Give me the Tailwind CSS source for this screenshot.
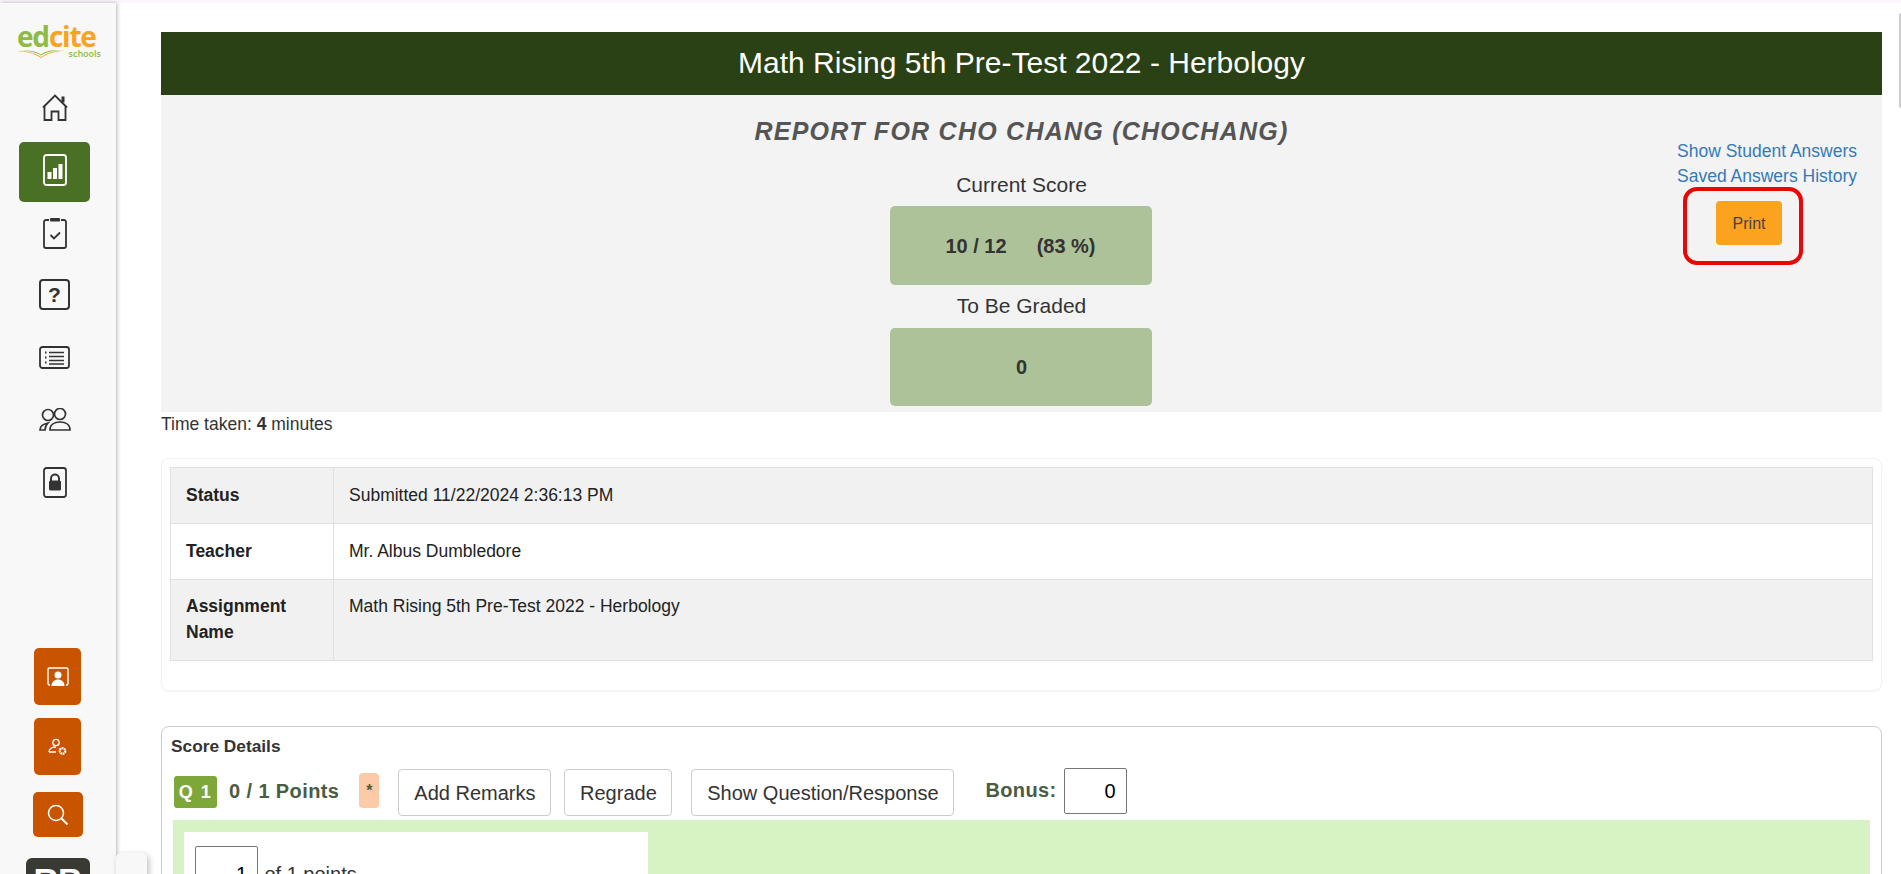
<!DOCTYPE html>
<html lang="en">
<head>
    <meta charset="UTF-8">
    <title>Report - Math Rising 5th Pre-Test 2022 - Herbology</title>
    <script src="https://cdn.jsdelivr.net/npm/@tailwindcss/browser@4"></script>
</head>
<body class="h-[874px] overflow-hidden bg-white font-['Liberation_Sans',Arial,sans-serif] text-[#333]">
    <div class="h-[3px] bg-[#fdf5fd]"></div>
    <div class="flex h-[871px]">
        <!-- Sidebar -->
        <aside class="relative flex h-full w-[116px] shrink-0 flex-col items-start bg-[#f8f8f8] pt-[23px] pl-[19px] shadow-[1px_0_4px_rgba(0,0,0,0.3)]">
            <div class="relative -ml-[2px] h-[37px] w-[84px]">
                <div class="font-['Open_Sans',sans-serif] text-[28px] leading-[20px] font-bold tracking-[-1.200px]"><span class="text-[#8dbb45]">ed</span><span class="text-[#fba21e]">cite</span></div>
                <div class="absolute top-[22px] right-0 font-['Open_Sans',sans-serif] text-[9px] leading-[12px] font-semibold text-[#8dbb45]">schools</div>
                <svg class="absolute top-[24px] left-0" width="48" height="8" viewBox="0 0 48 8" fill="none"><path d="M0 1c8 0 17 1 24 6C31 2 40 0 48 1c-9 0-17 2-24 7C17 3 9 2 0 1z" fill="#fba21e"/><path d="M5 .5c8-.5 15 1 19 4 4-3 11-5 19-4.500-7 .5-14 2-19 5.500C20 2.500 12 1 5 .5z" fill="#8dbb45"/></svg>
            </div>
            <nav class="mt-[31px] flex flex-col items-center">
                <a class="flex h-[27px] w-[71px] items-center justify-center">
                    <svg width="26" height="27" viewBox="0 0 26 27" fill="none" stroke="#333" stroke-width="1.800"><path d="M1 13.500 13 1.500l12 12"/><path d="M2.500 12.500V26h7v-8.500h7V26h7V12.500"/><path d="M21 8.500V2.500" stroke-width="3"/></svg>
                </a>
                <a class="mt-[21px] flex h-[60px] w-[71px] items-center justify-center rounded-[5px] bg-[#4a7026] pb-[5px]">
                    <svg width="24" height="32" viewBox="0 0 24 32" fill="none"><rect x="1" y="1" width="22" height="30" rx="2.500" stroke="#fff" stroke-width="1.800"/><rect x="4.500" y="18" width="4" height="7" fill="#fff"/><rect x="10" y="14" width="4" height="11" fill="#fff"/><rect x="15.500" y="10" width="4" height="15" fill="#fff"/></svg>
                </a>
                <a class="mt-[15px] flex h-[32px] w-[71px] items-center justify-center">
                    <svg width="24" height="32" viewBox="0 0 24 32" fill="none" stroke="#333" stroke-width="1.800"><path d="M6 3H3a2 2 0 0 0-2 2v24a2 2 0 0 0 2 2h18a2 2 0 0 0 2-2V5a2 2 0 0 0-2-2h-3"/><rect x="7" y="1" width="10" height="3.500" rx="1" fill="#333" stroke="none"/><path d="m7.500 18 3.500 3.500 6-6"/></svg>
                </a>
                <a class="mt-[30px] flex h-[31px] w-[71px] items-center justify-center">
                    <div class="flex h-[31px] w-[31px] items-center justify-center rounded-[4px] border-2 border-[#333] text-[21px] leading-none font-bold">?</div>
                </a>
                <a class="mt-[36px] flex h-[23px] w-[71px] items-center justify-center">
                    <svg width="31" height="23" viewBox="0 0 31 23" fill="none" stroke="#333" stroke-width="1.800"><rect x="1" y="1" width="29" height="21" rx="2.500"/><path d="M10 6.500h15M10 10.500h15M10 14.500h15M10 18h15" stroke-width="1.500"/><path d="M6 6.500h1.500M6 11.500h1.500M6 16.500h1.500" stroke-width="1.800"/></svg>
                </a>
                <a class="mt-[39px] flex h-[23px] w-[71px] items-center justify-center">
                    <svg width="32" height="23" viewBox="0 0 32 23" fill="none" stroke="#333" stroke-width="1.700"><circle cx="9" cy="7" r="5.500"/><circle cx="21" cy="6" r="5.500"/><path d="M1 22c0-3.500 3-6 8-7-2 2-3 4-3 7z"/><path d="M11 22c0-5 4-8 10-8s10 3 10 8z"/></svg>
                </a>
                <a class="mt-[36px] flex h-[31px] w-[71px] items-center justify-center">
                    <svg width="24" height="31" viewBox="0 0 24 31" fill="none"><rect x="1" y="1" width="22" height="29" rx="2.500" stroke="#333" stroke-width="1.800"/><path d="M8 14v-2.500a4 4 0 0 1 8 0V14" stroke="#333" stroke-width="2"/><rect x="6" y="13.500" width="12" height="10" rx="1.500" fill="#333"/></svg>
                </a>
            </nav>
            <!-- Bottom buttons -->
            <div class="absolute top-[645px] left-[34px] flex h-[57px] w-[47px] items-center justify-center rounded-[5px] bg-[#c95400]">
                <svg width="22" height="20" viewBox="0 0 22 20" fill="none"><path d="M3 18H2.500A1.500 1.500 0 0 1 1 16.500V2.500A1.500 1.500 0 0 1 2.500 1h17A1.500 1.500 0 0 1 21 2.500v14a1.500 1.500 0 0 1-1.500 1.500H19" stroke="#fff" stroke-width="1.400"/><circle cx="11" cy="8" r="3.500" fill="#fff"/><path d="M4.500 19c0-4 3-6.500 6.500-6.500s6.500 2.500 6.500 6.500z" fill="#fff"/></svg>
            </div>
            <div class="absolute top-[715px] left-[34px] flex h-[57px] w-[47px] items-center justify-center rounded-[5px] bg-[#c95400]">
                <svg width="20" height="18" viewBox="0 0 20 18" fill="none"><circle cx="8" cy="4.500" r="3.200" stroke="#fff" stroke-width="1.300"/><path d="M1 14c0-3 3-5 7-5M1 14h7" stroke="#fff" stroke-width="1.300"/><circle cx="14.500" cy="13" r="2.800" stroke="#fff" stroke-width="2.200" stroke-dasharray="1.800 0.600"/></svg>
            </div>
            <div class="absolute top-[789px] left-[33px] flex h-[45px] w-[50px] items-center justify-center rounded-[5px] bg-[#c95400]">
                <svg width="22" height="22" viewBox="0 0 22 22" fill="none" stroke="#fff"><circle cx="9" cy="9" r="7.500" stroke-width="1.500"/><path d="m14.500 14.500 6 6" stroke-width="2"/></svg>
            </div>
            <div class="absolute top-[855px] left-[26px] flex h-[60px] w-[64px] justify-center overflow-hidden rounded-[6px] bg-[#3a3a34] pt-[4px] text-[34px] leading-[36px] font-bold text-white">RB</div>
            <div class="absolute top-[850px] left-[116px] h-[40px] w-[31px] rounded-[5px] bg-[#f8f8f8] shadow-[2px_2px_6px_rgba(0,0,0,0.25)]"></div>
        </aside>

        <!-- Main -->
        <main class="w-[1783px] pt-[29px] pl-[45px]">
            <h1 class="flex h-[63px] w-[1721px] items-center justify-center bg-[#2a4015] pb-[2px] text-[30px] text-white">Math Rising 5th Pre-Test 2022 - Herbology</h1>
            <section class="relative flex h-[317px] w-[1721px] flex-col items-center bg-[#f3f3f3] pt-[21px]">
                <h2 class="text-[25px] leading-[30px] font-bold tracking-[1.250px] text-[#555] italic">REPORT FOR CHO CHANG (CHOCHANG)</h2>
                <p class="mt-[26px] text-[21px] leading-[26px]">Current Score</p>
                <div class="mt-[8px] mr-[2px] flex h-[79px] w-[262px] items-center justify-center gap-[30px] rounded-[5px] bg-[#aec29a] text-[20px] font-bold">
                    <span>10 / 12</span><span>(83 %)</span>
                </div>
                <p class="mt-[8px] text-[21px] leading-[26px]">To Be Graded</p>
                <div class="mt-[9px] mr-[2px] flex h-[78px] w-[262px] items-center justify-center rounded-[5px] bg-[#aec29a] pl-[2px] text-[20px] font-bold">0</div>
                <div class="absolute top-[44px] right-[25px] flex flex-col text-[17.500px] leading-[25px] text-[#337ab7]">
                    <a>Show Student Answers</a>
                    <a>Saved Answers History</a>
                    <button class="mt-[12px] ml-[39px] h-[44px] w-[66px] rounded-[4px] bg-[#fba21e] text-[16px] text-[#444]">Print</button>
                </div>
                <div class="absolute top-[92px] left-[1522px] h-[78px] w-[120px] rounded-[14px] border-[4px] border-[#e90606]"></div>
            </section>
            <p class="mt-[1px] w-[1721px] text-[17.500px] leading-[23px]">Time taken: <b>4</b> minutes</p>

            <section class="mt-[22px] w-[1721px] rounded-[8px] border border-[#f2f2f2] p-[8px] pb-[29px] shadow-[0_1px_2px_rgba(0,0,0,0.05)]">
                <table class="w-full border-collapse text-[17.500px] leading-[25.500px] text-[#222]">
                    <tr class="h-[56px] bg-[#f1f1f1]">
                        <th class="w-[163px] border border-[#dee2e6] px-[15px] text-left">Status</th>
                        <td class="border border-[#dee2e6] px-[15px]">Submitted 11/22/2024 2:36:13 PM</td>
                    </tr>
                    <tr class="h-[56px]">
                        <th class="border border-[#dee2e6] px-[15px] text-left">Teacher</th>
                        <td class="border border-[#dee2e6] px-[15px]">Mr. Albus Dumbledore</td>
                    </tr>
                    <tr class="h-[81px] bg-[#f1f1f1]">
                        <th class="border border-[#dee2e6] px-[15px] pt-[14px] pb-[12px] text-left align-top">Assignment Name</th>
                        <td class="border border-[#dee2e6] px-[15px] pt-[14px] pb-[12px] align-top">Math Rising 5th Pre-Test 2022 - Herbology</td>
                    </tr>
                </table>
            </section>

            <section class="mt-[35px] h-[300px] w-[1721px] rounded-[8px] border border-[#ccc] px-[11px] pt-[7px]">
                <h3 class="-ml-[2px] text-[17.300px] leading-[24px] font-bold">Score Details</h3>
                <div class="mt-[9px] flex h-[53px] items-start">
                    <span class="mt-[9px] ml-[1px] flex h-[32px] w-[43px] items-center justify-center rounded-[3px] bg-[#7ea73a] text-[18px] font-bold tracking-[1.500px] text-white">Q 1</span>
                    <span class="mt-[9px] ml-[12px] text-[20px] leading-[30px] font-bold tracking-[0.400px] text-[#4a5d42]">0 / 1 Points</span>
                    <span class="mt-[6px] ml-[20px] flex h-[35px] w-[20px] items-center justify-center rounded-[4px] bg-[#fdcaa8] font-bold text-[#4a5d42]">*</span>
                    <button class="mt-[2px] ml-[19px] h-[47px] w-[153px] rounded-[4px] border border-[#ccc] text-[20px]">Add Remarks</button>
                    <button class="mt-[2px] ml-[13px] h-[47px] w-[108px] rounded-[4px] border border-[#ccc] text-[20px]">Regrade</button>
                    <button class="mt-[2px] ml-[19px] h-[47px] w-[263px] rounded-[4px] border border-[#ccc] text-[20px]">Show Question/Response</button>
                    <span class="mt-[8px] ml-[31px] text-[20px] leading-[30px] font-bold tracking-[0.400px] text-[#4a5d42]">Bonus:</span>
                    <input class="mt-[1px] ml-[7px] h-[46px] w-[63px] rounded-[2px] border border-[#767676] px-[10px] text-right text-[20px] text-black" value="0">
                </div>
                <div class="h-[100px] bg-[#d7f2c3] pt-[12px] pl-[11px]">
                    <div class="h-[100px] w-[464px] bg-white pt-[14px] pl-[11px]">
                        <input class="h-[56px] w-[63px] rounded-[2px] border border-[#767676] px-[10px] text-right text-[20px] text-black" value="1">
                        <span class="ml-[2px] text-[20px]">of 1 points</span>
                    </div>
                </div>
            </section>
        </main>
        <div class="mt-[10px] h-[95px] w-[2px] rounded-l-[2px] bg-[#ccc]"></div>
    </div>
</body>
</html>
